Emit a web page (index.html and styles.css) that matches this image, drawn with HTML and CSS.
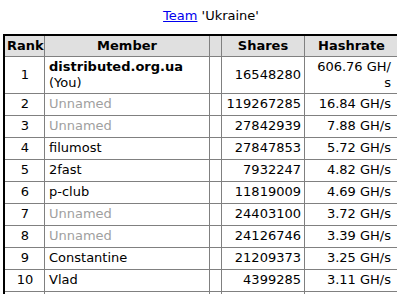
FILE: index.html
```html
<!DOCTYPE html>
<html>
<head>
<meta charset="utf-8">
<link rel="stylesheet" href="styles.css">
</head>
<body>
<div class="page">
  <div class="title"><a href="#" class="team-link">Team</a> 'Ukraine'</div>
  <table class="members">
    <colgroup>
      <col class="c-rank">
      <col class="c-member">
      <col class="c-blank">
      <col class="c-shares">
      <col class="c-rate">
      <col class="c-extra">
    </colgroup>
    <thead>
      <tr><th>Rank</th><th>Member</th><th></th><th>Shares</th><th>Hashrate</th><th></th></tr>
    </thead>
    <tbody>
      <tr class="first"><td class="rank">1</td><td class="member"><b>distributed.org.ua</b><br>(You)</td><td></td><td class="num">16548280</td><td class="rate">606.76 GH/<wbr>s</td><td></td></tr>
      <tr><td class="rank">2</td><td class="member unnamed">Unnamed</td><td></td><td class="num">119267285</td><td class="rate">16.84 GH/s</td><td></td></tr>
      <tr><td class="rank">3</td><td class="member unnamed">Unnamed</td><td></td><td class="num">27842939</td><td class="rate">7.88 GH/s</td><td></td></tr>
      <tr><td class="rank">4</td><td class="member">filumost</td><td></td><td class="num">27847853</td><td class="rate">5.72 GH/s</td><td></td></tr>
      <tr><td class="rank">5</td><td class="member">2fast</td><td></td><td class="num">7932247</td><td class="rate">4.82 GH/s</td><td></td></tr>
      <tr><td class="rank">6</td><td class="member">p-club</td><td></td><td class="num">11819009</td><td class="rate">4.69 GH/s</td><td></td></tr>
      <tr><td class="rank">7</td><td class="member unnamed">Unnamed</td><td></td><td class="num">24403100</td><td class="rate">3.72 GH/s</td><td></td></tr>
      <tr><td class="rank">8</td><td class="member unnamed">Unnamed</td><td></td><td class="num">24126746</td><td class="rate">3.39 GH/s</td><td></td></tr>
      <tr><td class="rank">9</td><td class="member">Constantine</td><td></td><td class="num">21209373</td><td class="rate">3.25 GH/s</td><td></td></tr>
      <tr><td class="rank">10</td><td class="member">Vlad</td><td></td><td class="num">4399285</td><td class="rate">3.11 GH/s</td><td></td></tr>
      <tr class="filler"><td class="rank"></td><td class="member"></td><td></td><td class="num"></td><td class="rate"></td><td></td></tr>
    </tbody>
  </table>
</div>
</body>
</html>
```
FILE: styles.css
```css
html, body {
  margin: 0;
  padding: 0;
  overflow: hidden;
  background: #ffffff;
}

body {
  font-family: "DejaVu Sans", Verdana, sans-serif;
  font-size: 13px;
  line-height: 16px;
  color: #000000;
}

.page {
  width: 416px;
  margin-left: 3px;
}

.title {
  text-align: center;
  padding-top: 8px;
  margin-bottom: 10px;
}

.team-link {
  color: #0000ee;
  text-decoration: underline;
}

.members {
  table-layout: fixed;
  width: 416px;
  border: 2px solid #000000;
  border-collapse: separate;
  border-spacing: 0;
}

.c-rank { width: 40px; }
.c-member { width: 165px; }
.c-blank { width: 12px; }
.c-shares { width: 83px; }
.c-rate { width: 94px; }
.c-extra { width: 18px; }

.members th,
.members td {
  box-sizing: border-box;
  border-right: 1px solid #808080;
  border-bottom: 1px solid #808080;
  padding: 2px 3px 3px 4px;
  vertical-align: middle;
}

.members th {
  background: #e0e0e0;
  font-weight: bold;
  text-align: center;
  padding: 2px;
}

.members .first td {
  padding-top: 2px;
  padding-bottom: 2px;
}

.members .filler td {
  height: 22px;
}

.rank {
  text-align: center;
}

.member {
  text-align: left;
}

.unnamed {
  color: #a0a0a0;
}

.num {
  text-align: right;
}

.members td.rate {
  text-align: right;
  padding-left: 10px;
  padding-right: 7px;
}
```
